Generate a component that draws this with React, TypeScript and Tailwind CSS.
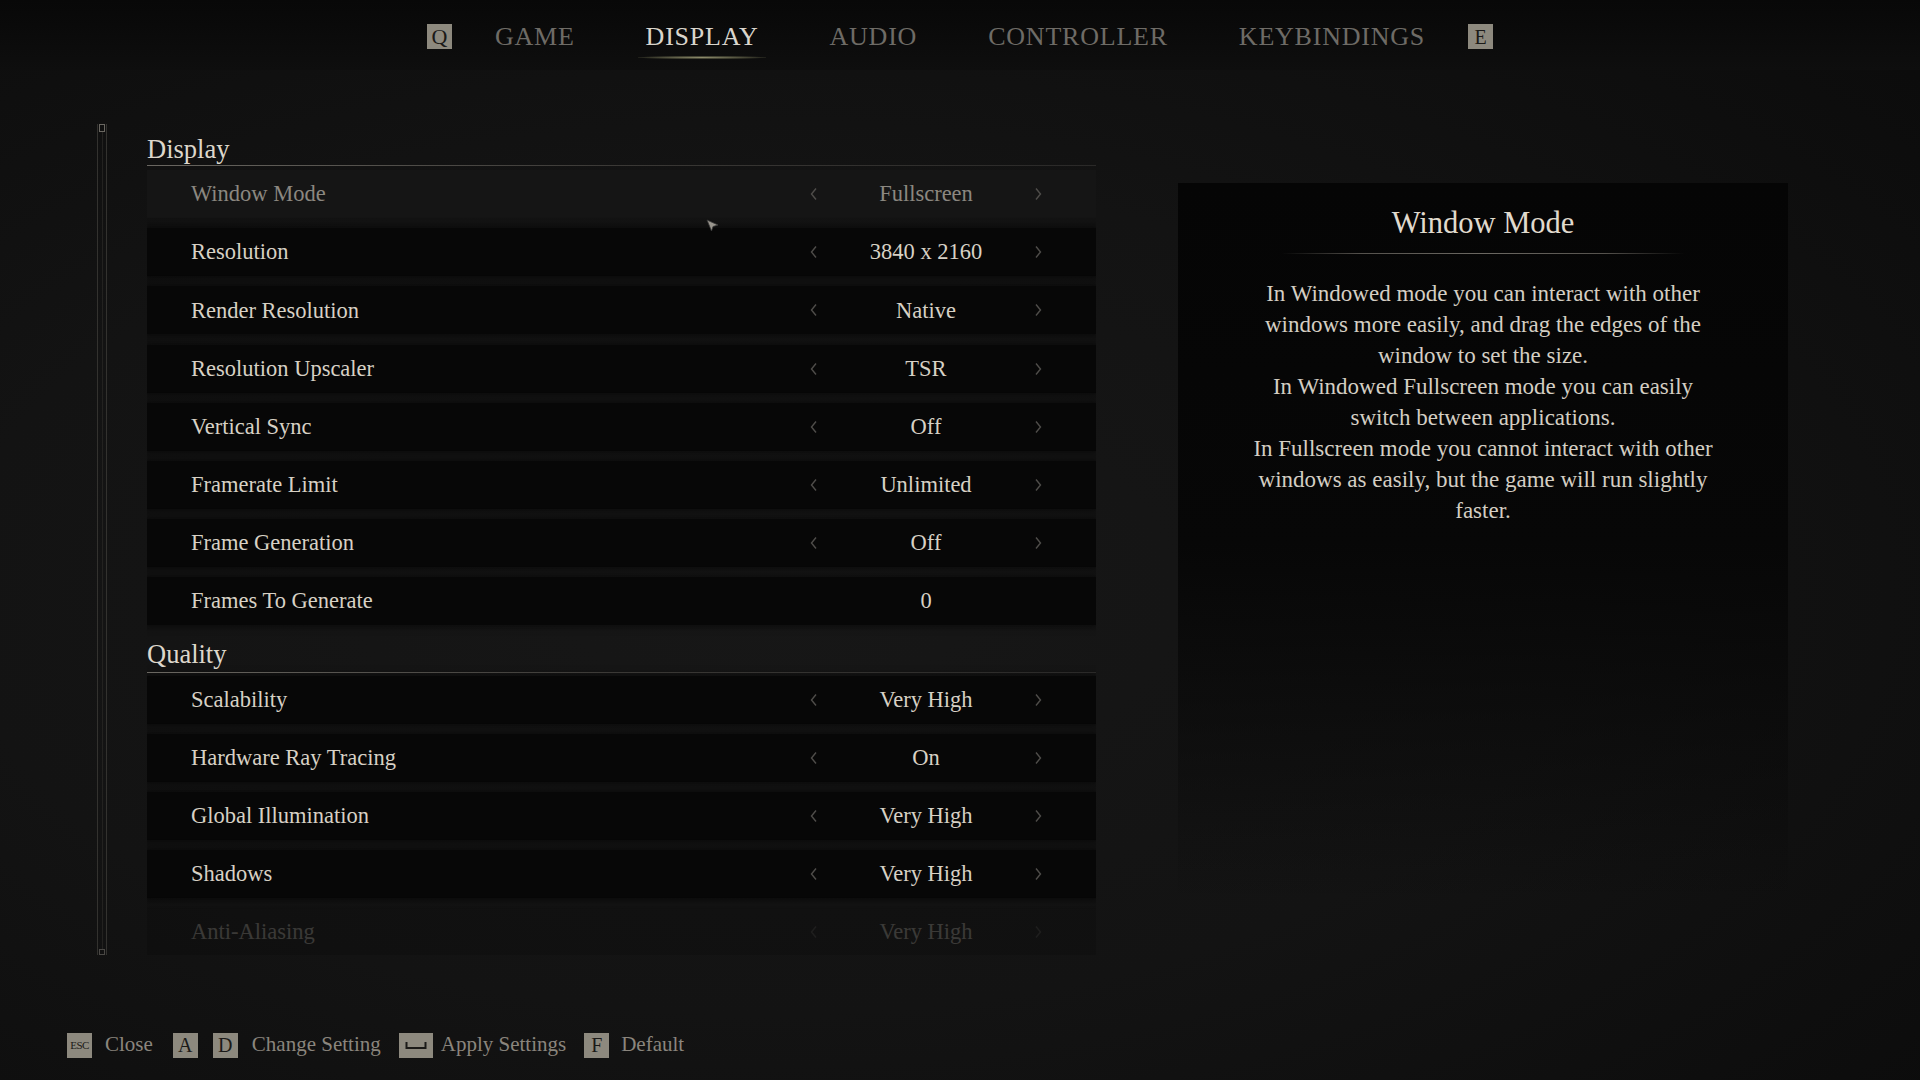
const serif = { fontFamily: '"Liberation Serif", "DejaVu Serif", serif' };

type Row = { label: string; value: string; arrows?: boolean; dim?: boolean; fade?: boolean };

const displayRows: Row[] = [
  { label: "Window Mode", value: "Fullscreen", dim: true },
  { label: "Resolution", value: "3840 x 2160" },
  { label: "Render Resolution", value: "Native" },
  { label: "Resolution Upscaler", value: "TSR" },
  { label: "Vertical Sync", value: "Off" },
  { label: "Framerate Limit", value: "Unlimited" },
  { label: "Frame Generation", value: "Off" },
  { label: "Frames To Generate", value: "0", arrows: false },
];

const qualityRows: Row[] = [
  { label: "Scalability", value: "Very High" },
  { label: "Hardware Ray Tracing", value: "On" },
  { label: "Global Illumination", value: "Very High" },
  { label: "Shadows", value: "Very High" },
  { label: "Anti-Aliasing", value: "Very High", fade: true },
];

const tabs = ["GAME", "DISPLAY", "AUDIO", "CONTROLLER", "KEYBINDINGS"];

const description = [
  "In Windowed mode you can interact with other",
  "windows more easily, and drag the edges of the",
  "window to set the size.",
  "In Windowed Fullscreen mode you can easily",
  "switch between applications.",
  "In Fullscreen mode you cannot interact with other",
  "windows as easily, but the game will run slightly",
  "faster.",
];

function Chevron({ dir }: { dir: "left" | "right" }) {
  return (
    <svg width="10" height="14" viewBox="0 0 10 14" className="shrink-0">
      <polyline
        points={dir === "left" ? "7,1.5 2.5,7 7,12.5" : "3,1.5 7.5,7 3,12.5"}
        fill="none"
        stroke="#4f4d4a"
        strokeWidth="1.4"
      />
    </svg>
  );
}

function Key({ children, wide }: { children: React.ReactNode; wide?: boolean }) {
  return (
    <div
      className={`flex h-[25px] items-center justify-center bg-[#8d897e] text-[#1b1a18] ${wide ? "w-[34px]" : "w-[25px]"}`}
    >
      {children}
    </div>
  );
}

function Heading({ title }: { title: string }) {
  return (
    <div className="relative h-[37px]">
      <div className="pt-[2px] text-[26.5px] leading-[33px] text-[#ddd7cb]">{title}</div>
      <div className="absolute bottom-0 left-0 h-[1px] w-[949px] bg-gradient-to-r from-[#6a6761] via-[#3a3835] to-[#2a2928]" />
    </div>
  );
}

function SettingRow({ row }: { row: Row }) {
  const arrows = row.arrows !== false;
  const text = row.dim ? "text-[#8b8780]" : "text-[#d7d1c5]";
  return (
    <div
      className={`flex h-[48px] w-[949px] items-center ${
        row.dim ? "bg-[#151515]" : "bg-[#070707] shadow-[0_0_6px_2px_rgba(5,5,5,0.6)]"
      } ${row.fade ? "opacity-20" : ""}`}
    >
      <div className={`flex-1 pl-[44px] text-[22.5px] ${text}`}>{row.label}</div>
      <div className="mr-[45px] flex w-[250px] items-center justify-between px-[8px]">
        {arrows ? <Chevron dir="left" /> : <span className="w-[10px]" />}
        <span className={`text-[22.5px] ${text}`}>{row.value}</span>
        {arrows ? <Chevron dir="right" /> : <span className="w-[10px]" />}
      </div>
    </div>
  );
}

export default function App() {
  return (
    <div
      style={serif}
      className="relative flex h-[1080px] w-[1920px] flex-col overflow-hidden bg-[radial-gradient(ellipse_at_40%_55%,#171717_0%,#131313_50%,#0b0b0b_100%)]"
    >
      {/* top tabs */}
      <div className="flex h-[70px] items-center justify-center bg-gradient-to-b from-[#080808] to-[#0e0e0e] pt-[3px]">
        <Key>
          <span className="text-[22px] leading-none">Q</span>
        </Key>
        <div className="mx-[43px] flex gap-[71px]">
          {tabs.map((t) => (
            <div key={t} className="relative">
              <span
                className={`text-[26px] tracking-[0.03em] ${
                  t === "DISPLAY" ? "text-[#d9d5cc]" : "text-[#6e6b66]"
                }`}
              >
                {t}
              </span>
              {t === "DISPLAY" && (
                <div className="absolute -bottom-[3px] left-[-8px] right-[-8px] h-[3px] bg-[radial-gradient(ellipse_at_center,#8e8c6c_0%,#3a3a2c_55%,transparent_80%)]" />
              )}
            </div>
          ))}
        </div>
        <Key>
          <span className="text-[20px] leading-none">E</span>
        </Key>
      </div>

      {/* main */}
      <div className="flex flex-1 pt-[54px]">
        {/* scrollbar */}
        <div className="ml-[97px] flex h-[831px] w-[10px] flex-col border-x border-[#33322f]">
          <div className="mx-[1px] h-[8px] border border-[#6a6761]" />
          <div className="mx-auto w-[1px] flex-1 bg-[#232220]" />
          <div className="mx-[1px] h-[6px] border border-[#4a4845]" />
        </div>

        {/* list */}
        <div className="ml-[40px] flex h-[831px] flex-col overflow-hidden pt-[7px]">
          <Heading title="Display" />
          <div className="mt-[4px] flex flex-col gap-[10.2px]">
            {displayRows.map((r) => (
              <SettingRow key={r.label} row={r} />
            ))}
          </div>
          <div className="mt-[10.2px]">
            <Heading title="Quality" />
          </div>
          <div className="mt-[3px] flex flex-col gap-[10.2px]">
            {qualityRows.map((r) => (
              <SettingRow key={r.label} row={r} />
            ))}
          </div>
        </div>

        {/* description panel */}
        <div className="ml-[82px] mt-[59px] h-[720px] w-[610px] bg-gradient-to-b from-[#050505] via-[#070707] to-transparent">
          <div className="pt-[22px] text-center text-[30.5px] leading-[36px] text-[#e0dace]">Window Mode</div>
          <div className="mx-auto mt-[12px] h-[1px] w-[404px] bg-[linear-gradient(to_right,transparent,#55524d_20%,#6b6862_50%,#55524d_80%,transparent)]" />
          <div className="mt-[24px] flex flex-col items-center text-[23px] leading-[31px] text-[#d4cec3]">
            {description.map((l) => (
              <div key={l}>{l}</div>
            ))}
          </div>
        </div>
      </div>

      {/* bottom hints */}
      <div className="flex h-[70px] items-center pl-[67px] text-[21px] text-[#8a857d]">
        <Key>
          <span className="text-[11px] leading-none tracking-tighter">ESC</span>
        </Key>
        <span className="ml-[13px]">Close</span>
        <div className="ml-[20px]">
          <Key>
            <span className="text-[20px] leading-none">A</span>
          </Key>
        </div>
        <div className="ml-[15px]">
          <Key>
            <span className="text-[20px] leading-none">D</span>
          </Key>
        </div>
        <span className="ml-[14px]">Change Setting</span>
        <div className="ml-[18px]">
          <Key wide>
            <svg width="22" height="10" viewBox="0 0 22 10">
              <polyline points="1.5,2 1.5,8 20.5,8 20.5,2" fill="none" stroke="#1b1a18" strokeWidth="2" />
            </svg>
          </Key>
        </div>
        <span className="ml-[8px]">Apply Settings</span>
        <div className="ml-[18px]">
          <Key>
            <span className="text-[20px] leading-none">F</span>
          </Key>
        </div>
        <span className="ml-[12px]">Default</span>
      </div>

      {/* mouse cursor */}
      <svg className="absolute left-[706px] top-[219px]" width="14" height="14" viewBox="0 0 14 14">
        <path d="M1 1 L12 6 L7 7.5 L5.5 12 Z" fill="#9a968e" stroke="#3a3a3a" strokeWidth="0.8" />
      </svg>
    </div>
  );
}
